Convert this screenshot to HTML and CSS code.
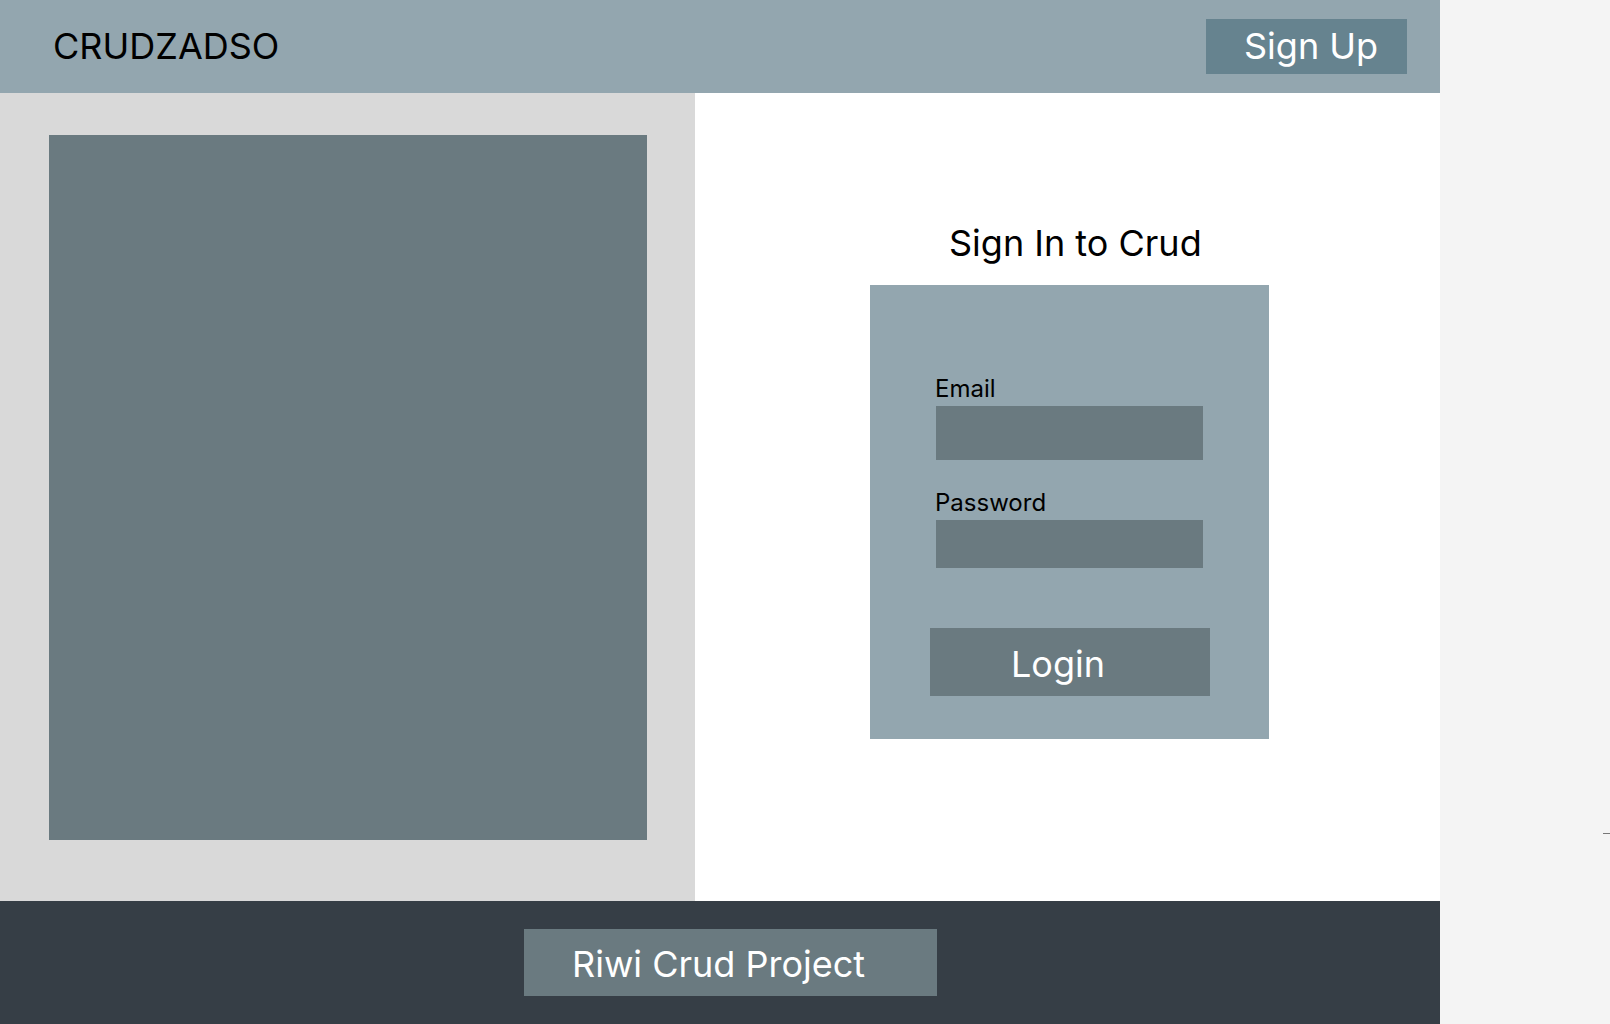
FILE: index.html
```html
<!DOCTYPE html>
<html lang="en">
<head>
<meta charset="utf-8">
<title>CRUDZADSO</title>
<link rel="stylesheet" href="styles.css">
</head>
<body>
<div class="frame">
  <header class="topbar">
    <div class="logo">CRUDZADSO</div>
    <button class="signup">Sign Up</button>
  </header>
  <main class="content">
    <section class="left">
      <div class="picture"></div>
    </section>
    <section class="right">
      <h1 class="title">Sign In to Crud</h1>
      <form class="card">
        <label class="label">Email</label>
        <div class="input input-email"></div>
        <label class="label label-pass">Password</label>
        <div class="input input-pass"></div>
        <button type="button" class="login">Login</button>
      </form>
    </section>
  </main>
  <footer class="footer">
    <div class="footbox">Riwi Crud Project</div>
  </footer>
</div>
<div class="edge-mark"></div>
</body>
</html>
```

FILE: styles.css
```css
* { box-sizing: border-box; }
html, body {
  margin: 0;
  padding: 0;
}
body {
  background: #f4f4f4;
  font-family: Inter, "Noto Sans", sans-serif;
  width: 1610px;
  height: 1024px;
  overflow: hidden;
  position: relative;
}
.frame {
  width: 1440px;
  display: flex;
  flex-direction: column;
}
.topbar {
  height: 93px;
  background: #93a6af;
  display: flex;
  align-items: center;
  justify-content: space-between;
  padding: 0 33px 0 53px;
}
.logo {
  font-size: 36px;
  line-height: 1.2;
  color: #000;
  margin-top: 0;
}
.signup {
  width: 201px;
  height: 55px;
  background: #66838f;
  border: 0;
  color: #fff;
  font-family: inherit;
  font-size: 36px;
  line-height: 1;
  text-align: left;
  padding: 0 0 2px 38px;
}
.content {
  display: grid;
  grid-template-columns: 695px 745px;
  height: 808px;
}
.left {
  background: #d9d9d9;
  padding: 42px 48px 61px 49px;
}
.picture {
  width: 598px;
  height: 705px;
  background: #6a7a80;
}
.right {
  background: #fff;
  padding-top: 129px;
}
.title {
  margin: 0 0 20px 254px;
  font-size: 36px;
  font-weight: 400;
  line-height: 43px;
  color: #000;
}
.card {
  margin: 0 0 0 175px;
  width: 399px;
  height: 454px;
  background: #93a6af;
  padding: 89px 0 0 0;
  display: flex;
  flex-direction: column;
  align-items: flex-start;
}
.label {
  display: block;
  font-size: 24px;
  line-height: 29px;
  color: #000;
  margin-left: 65px;
}
.label-pass {
  margin-top: 28px;
}
.input {
  width: 267px;
  background: #6a7a80;
  margin-left: 66px;
  margin-top: 3px;
}
.input-email { height: 54px; }
.input-pass { height: 48px; }
.login {
  margin: 60px 0 0 60px;
  width: 280px;
  height: 68px;
  background: #6a7a80;
  border: 0;
  color: #fff;
  font-family: inherit;
  font-size: 36px;
  line-height: 1;
  text-align: left;
  padding: 3px 0 0 81px;
}
.footer {
  height: 123px;
  background: #363e46;
  display: flex;
  align-items: center;
  padding-left: 524px;
}
.footbox {
  width: 413px;
  height: 67px;
  background: #6a7a80;
  color: #fff;
  font-size: 36px;
  line-height: 67px;
  padding: 2px 0 0 48px;
}
.edge-mark {
  position: absolute;
  left: 1603px;
  top: 833px;
  width: 7px;
  height: 1px;
  background: #777;
}
```
